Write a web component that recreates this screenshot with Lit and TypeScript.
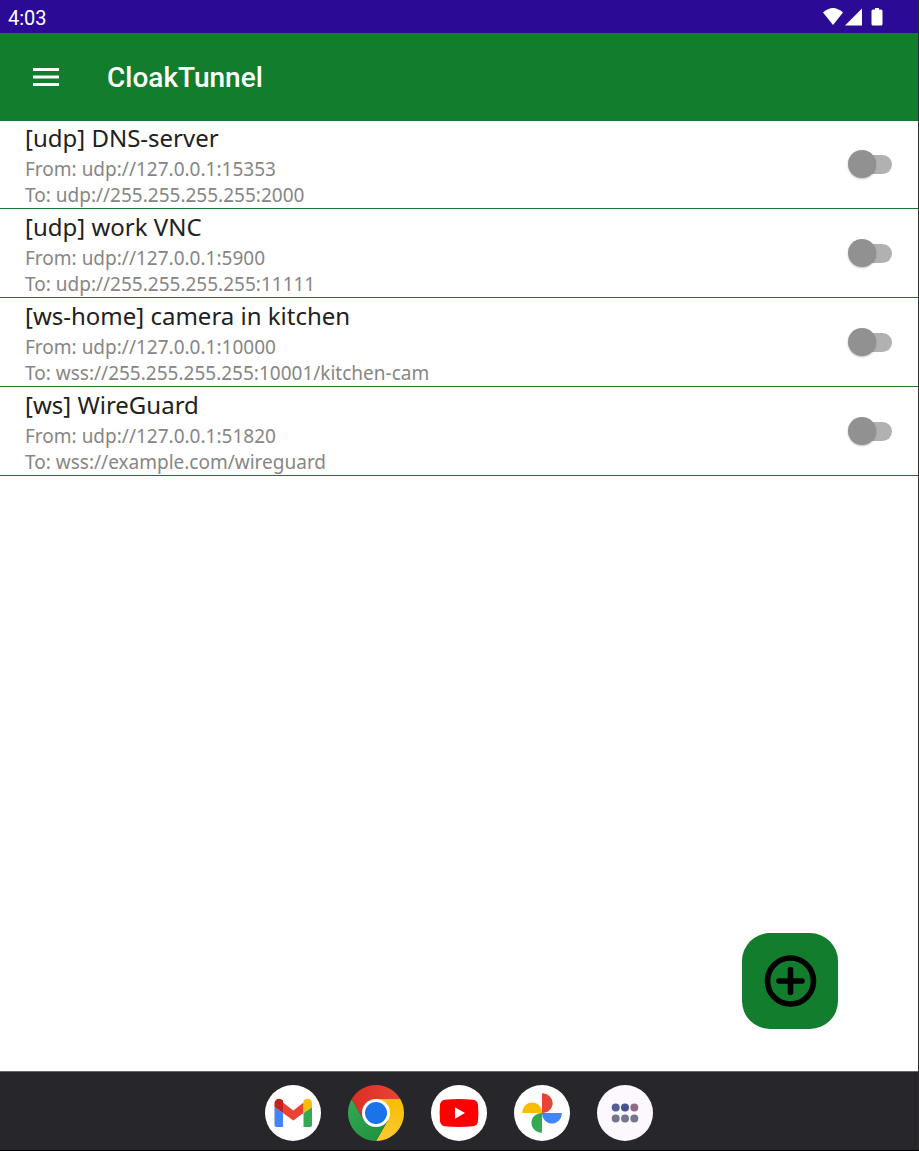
import { LitElement, html, css, svg } from "lit";
import { customElement, state } from "lit/decorators.js";

interface Tunnel {
  name: string;
  from: string;
  to: string;
  on: boolean;
}

@customElement("tunnel-row")
class TunnelRow extends LitElement {
  static properties = { tunnel: { attribute: false } };
  declare tunnel: Tunnel;

  static styles = css`
    :host {
      display: block;
    }
    .row {
      display: flex;
      align-items: center;
      justify-content: space-between;
      gap: 24px;
      padding: 0 26px 0 25px;
      border-bottom: 1px solid #117d2d;
    }
    .text {
      display: block;
      min-width: 0;
    }
    .name {
      display: block;
      margin-bottom: 2px;
      font-size: 24px;
      line-height: 33px;
      color: #212121;
    }
    .line {
      display: block;
      font-size: 19px;
      line-height: 26px;
      color: #868686;
    }
    .switch {
      appearance: none;
      flex: none;
      position: relative;
      width: 44px;
      height: 29px;
      margin: 0;
      cursor: pointer;
    }
    .switch::before {
      content: "";
      position: absolute;
      inset: 5px 0 5px 4px;
      border-radius: 10px;
      background: #b1b1b1;
    }
    .switch::after {
      content: "";
      position: absolute;
      left: 0;
      top: 0;
      width: 28px;
      height: 28px;
      border-radius: 50%;
      background: #919191;
      box-shadow: 0 1px 2px rgba(0, 0, 0, 0.25);
    }
    .switch:checked::before {
      background: #88be96;
    }
    .switch:checked::after {
      left: 16px;
      background: #117d2d;
    }
  `;

  render() {
    const t = this.tunnel;
    return html`
      <div class="row">
        <label class="text" for="toggle">
          <span class="name">${t.name}</span>
          <span class="line">From: ${t.from}</span>
          <span class="line">To: ${t.to}</span>
        </label>
        <input id="toggle" class="switch" type="checkbox" role="switch" .checked=${t.on} />
      </div>
    `;
  }
}

const gmail = svg`
  <circle cx="28" cy="28" r="28" fill="#fff"/>
  <path d="M9.500 22v18q0 2 2 2H18V28z" fill="#4285f4"/>
  <path d="M47 22v18q0 2-2 2h-6.500V28z" fill="#34a853"/>
  <path d="M18 17.500l10.300 8 10.200-8V28l-10.200 7.500L18 28z" fill="#ea4335"/>
  <path d="M9.500 22v-3.500c0-4.500 4.500-6 7.500-3.700l1 .8V28z" fill="#c5221f"/>
  <path d="M47 22v-3.500c0-4.500-4.500-6-7.500-3.700l-1 .8V28z" fill="#fbbc04"/>`;

const chrome = svg`
  <defs>
    <linearGradient id="r" x1="0" y1="0" x2="1" y2="0"><stop offset="0" stop-color="#d93025"/><stop offset="1" stop-color="#ea4335"/></linearGradient>
    <linearGradient id="g" x1="0" y1="0" x2="1" y2="1"><stop offset="0" stop-color="#34a853"/><stop offset="1" stop-color="#1e8e3e"/></linearGradient>
    <linearGradient id="y" x1="0" y1="1" x2="0" y2="0"><stop offset="0" stop-color="#fcc934"/><stop offset="1" stop-color="#fbbc04"/></linearGradient>
  </defs>
  <path d="M28 14h24.250A28 28 0 0 1 28 56l12.120-21z" fill="url(#y)"/>
  <path d="M15.880 35L3.750 14A28 28 0 0 0 28 56l12.120-21L28 42z" fill="url(#g)"/>
  <path d="M28 14h24.250A28 28 0 0 0 3.750 14l12.130 21z" fill="url(#r)"/>
  <circle cx="28" cy="28" r="14" fill="#fff"/>
  <circle cx="28" cy="28" r="11" fill="#1a73e8"/>`;

const youtube = svg`
  <circle cx="28" cy="28" r="28" fill="#fff"/>
  <path d="M14 14.800q14-1.600 28 0 4.500.5 5 5 .8 8.200 0 16.400-.5 4.500-5 5-14 1.600-28 0-4.500-.5-5-5-.8-8.200 0-16.400.5-4.500 5-5z" fill="#f00"/>
  <path d="M24 22.200v11.600L34 28z" fill="#fff"/>`;

const photos = svg`
  <circle cx="28" cy="28" r="28" fill="#fff"/>
  <path d="M28 8.200c6 0 10.600 4.500 10.600 10S34 28 28 28z" fill="#ea4335"/>
  <path d="M47.800 28c0 6-4.400 10.600-9.900 10.600S28 34 28 28z" fill="#4285f4"/>
  <path d="M28 47.800c-6 0-10.600-4.500-10.600-10S22 28 28 28z" fill="#34a853"/>
  <path d="M8.200 28c0-6 4.400-10.600 9.900-10.600S28 22 28 28z" fill="#fbbc04"/>`;

const drawer = svg`
  <circle cx="28" cy="28" r="28" fill="#fdf8fe"/>
  <circle cx="18.700" cy="22.500" r="4" fill="#535f99"/>
  <circle cx="28" cy="22.500" r="4" fill="#474f8d"/>
  <circle cx="37.300" cy="22.500" r="4" fill="#916b86"/>
  <g fill="#73778c"><circle cx="18.700" cy="33.500" r="4"/><circle cx="28" cy="33.500" r="4"/><circle cx="37.300" cy="33.500" r="4"/></g>`;

const apps = [
  { label: "Gmail", art: gmail },
  { label: "Chrome", art: chrome },
  { label: "YouTube", art: youtube },
  { label: "Photos", art: photos },
  { label: "All apps", art: drawer },
];

@customElement("app-root")
class AppRoot extends LitElement {
  @state() private tunnels: Tunnel[] = [
    { name: "[udp] DNS-server", from: "udp://127.0.0.1:15353", to: "udp://255.255.255.255:2000", on: false },
    { name: "[udp] work VNC", from: "udp://127.0.0.1:5900", to: "udp://255.255.255.255:11111", on: false },
    { name: "[ws-home] camera in kitchen", from: "udp://127.0.0.1:10000", to: "wss://255.255.255.255:10001/kitchen-cam", on: false },
    { name: "[ws] WireGuard", from: "udp://127.0.0.1:51820", to: "wss://example.com/wireguard", on: false },
  ];

  static styles = css`
    :host {
      display: flex;
      flex-direction: column;
      box-sizing: border-box;
      min-height: 100vh;
      border-right: 1px solid #2b2b2f;
      border-bottom: 1px solid #000;
      background: #fff;
      font-family: "Noto Sans", "Open Sans", sans-serif;
    }
    button {
      display: block;
      padding: 0;
      border: 0;
      background: none;
      cursor: pointer;
    }
    svg {
      display: block;
    }
    .status {
      display: flex;
      align-items: center;
      justify-content: space-between;
      height: 33px;
      padding: 0 32px 0 8px;
      background: #2b0a96;
      color: #fff;
      font: 20px/32px Roboto, sans-serif;
    }
    .clock {
      padding-top: 2px;
    }
    .bar {
      display: flex;
      align-items: center;
      gap: 45px;
      height: 88px;
      padding: 0 30px;
      background: #117d2d;
      color: #fff;
    }
    .title {
      margin: 0;
      padding-top: 2px;
      font: 500 28px/32px Roboto, sans-serif;
    }
    .content {
      flex: 1;
      display: flex;
      flex-direction: column;
    }
    .list {
      margin: 0;
      padding: 0;
      list-style: none;
    }
    .list li + li {
      padding-top: 1px;
    }
    .add {
      display: grid;
      place-items: center;
      width: 96px;
      height: 96px;
      margin: auto 80px 42px auto;
      border-radius: 28px;
      background: #117d2d;
    }
    .dock {
      display: flex;
      align-items: center;
      justify-content: center;
      gap: 27px;
      height: 79px;
      padding-top: 4px;
      box-sizing: border-box;
      border-top: 1px solid #626866;
      background: #27262b;
    }
  `;

  render() {
    return html`
      <div class="status">
        <span class="clock">4:03</span>
        <svg width="64" height="20" viewBox="0 0 64 20" fill="#fff" aria-hidden="true">
          <path d="M1 5.500Q11-3.500 21 5.500L11 18z"/>
          <path d="M40 1.500V18.500H23z"/>
          <path d="M53 1h4v1.500h2q1.500 0 1.500 1.500v13q0 1.500-1.500 1.500h-8q-1.500 0-1.500-1.500V4q0-1.500 1.500-1.500h2z"/>
        </svg>
      </div>
      <header class="bar">
        <button aria-label="Open menu">
          <svg width="32" height="32" viewBox="0 0 32 32" fill="#fff">
            <path d="M3 7h26v3H3zM3 14.500h26v3H3zM3 22h26v3H3z"/>
          </svg>
        </button>
        <h1 class="title">CloakTunnel</h1>
      </header>
      <main class="content">
        <ul class="list">
          ${this.tunnels.map((t) => html`<li><tunnel-row .tunnel=${t}></tunnel-row></li>`)}
        </ul>
        <button class="add" aria-label="Add tunnel">
          <svg width="56" height="56" viewBox="0 0 56 56" fill="none" stroke="#000">
            <circle cx="28.500" cy="28" r="23" stroke-width="5.600"/>
            <path d="M28.500 16.500v23M17 28h23" stroke-width="5.600" stroke-linecap="round"/>
          </svg>
        </button>
      </main>
      <nav class="dock" aria-label="Apps">
        ${apps.map(
          (a) => html`<button aria-label=${a.label}>
            <svg width="56" height="56" viewBox="0 0 56 56">${a.art}</svg>
          </button>`
        )}
      </nav>
    `;
  }
}
